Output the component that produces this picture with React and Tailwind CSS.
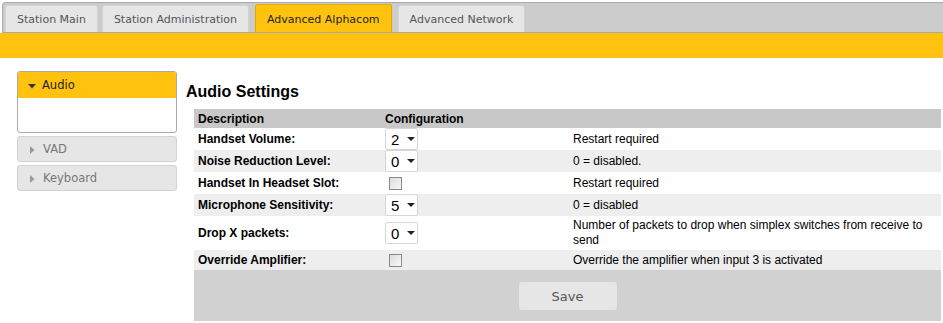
import React from "react";

const tabFont = { fontFamily: '"DejaVu Sans", Verdana, sans-serif' };

function Tab({ label, active }) {
  return (
    <div
      className={
        "px-[11px] flex items-center text-[11px] rounded-t-[3px] border border-b-0 pt-[3px] " +
        (active
          ? "bg-[#ffc20e] border-[#e0a800] text-[#222] h-[28px]"
          : "bg-[#e6e6e6] border-[#d3d3d3] text-[#555] h-[27px]")
      }
      style={tabFont}
    >
      {label}
    </div>
  );
}

function Select({ value }) {
  return (
    <div className="w-[33px] h-[22px] border border-[#d6d6d6] rounded-[2px] bg-white flex items-center pl-[5px] text-[15px] text-black">
      <span className="leading-none">{value}</span>
      <svg width="8" height="5" viewBox="0 0 8 5" className="ml-[8px] mt-[1px]">
        <path d="M0 0 L8 0 L4 4 Z" fill="#222" />
      </svg>
    </div>
  );
}

function Checkbox() {
  return (
    <div className="w-[13px] h-[13px] border border-[#8a8a8a] bg-gradient-to-br from-[#dcdcdc] to-[#f8f8f8] ml-[4px]" />
  );
}

const rows = [
  { label: "Handset Volume:", ctrl: <Select value="2" />, note: "Restart required", h: "h-[22px]" },
  { label: "Noise Reduction Level:", ctrl: <Select value="0" />, note: "0 = disabled.", h: "h-[22px]" },
  { label: "Handset In Headset Slot:", ctrl: <Checkbox />, note: "Restart required", h: "h-[22px]" },
  { label: "Microphone Sensitivity:", ctrl: <Select value="5" />, note: "0 = disabled", h: "h-[22px]" },
  {
    label: "Drop X packets:",
    ctrl: <Select value="0" />,
    note: "Number of packets to drop when simplex switches from receive to send",
    h: "h-[34px]",
  },
  { label: "Override Amplifier:", ctrl: <Checkbox />, note: "Override the amplifier when input 3 is activated", h: "h-[20px]" },
];

export default function App() {
  return (
    <div className="w-[943px] h-[323px] bg-white overflow-hidden relative" style={{ fontFamily: '"Liberation Sans", Arial, sans-serif' }}>
      {/* top tab bar */}
      <div className="ml-[2px] mt-[2px] bg-[#cccccc] border-t border-l border-[#aaaaaa] rounded-tl-[4px] h-[31px] flex items-end pl-[2px] gap-[4px] border-b border-b-[#aaaaaa]">
        <Tab label="Station Main" />
        <Tab label="Station Administration" />
        <div className="ml-[2px]">
          <Tab label="Advanced Alphacom" active />
        </div>
        <div className="ml-[2px]">
          <Tab label="Advanced Network" />
        </div>
      </div>
      <div className="h-[25px] bg-[#ffc20e]" />

      <div className="flex mt-[13px]">
        {/* sidebar */}
        <div className="ml-[17px] w-[160px] flex flex-col gap-[3px]" style={tabFont}>
          <div className="h-[62px] border border-[#aaaaaa] rounded-[3px] bg-white overflow-hidden">
            <div className="h-[26px] bg-[#ffc20e] flex items-center pl-[10px] pt-[2px] text-[11.5px] text-[#222]">
              <svg width="8" height="5" viewBox="0 0 8 5" className="mr-[6px]">
                <path d="M0 0 L8 0 L4 4.5 Z" fill="#333" />
              </svg>
              Audio
            </div>
          </div>
          {["VAD", "Keyboard"].map((l) => (
            <div key={l} className="h-[26px] bg-[#e6e6e6] border border-[#d3d3d3] rounded-[3px] flex items-center pl-[12px] pt-[2px] text-[11.5px] text-[#777]">
              <svg width="5" height="8" viewBox="0 0 5 8" className="mr-[8px]">
                <path d="M0 0 L4.5 4 L0 8 Z" fill="#999" />
              </svg>
              {l}
            </div>
          ))}
        </div>

        {/* main */}
        <div className="ml-[9px] flex-1">
          <div className="text-[16px] font-bold text-black mt-[11px] leading-[20px]">Audio Settings</div>
          <div className="ml-[8px] mt-[7px] w-[747px] text-[12px] text-black">
            <div className="h-[19px] bg-[#c8c8c8] flex items-center font-bold">
              <div className="w-[191px] pl-[4px]">Description</div>
              <div>Configuration</div>
            </div>
            {rows.map((r, i) => (
              <div key={i} className={"flex items-center " + r.h + " " + (i % 2 === 1 ? "bg-[#eeeeee]" : "bg-white")}>
                <div className="w-[191px] pl-[4px] font-bold">{r.label}</div>
                <div className="w-[188px]">{r.ctrl}</div>
                <div className="flex-1 pr-[4px] leading-[15px]">{r.note}</div>
              </div>
            ))}
            <div className="h-[51px] bg-[#d1d1d1] flex justify-center items-center">
              <div className="w-[98px] h-[28px] bg-[#e6e6e6] rounded-[3px] flex items-center justify-center pt-[2px] text-[13px] text-[#555]" style={tabFont}>
                Save
              </div>
            </div>
          </div>
        </div>
      </div>
    </div>
  );
}
